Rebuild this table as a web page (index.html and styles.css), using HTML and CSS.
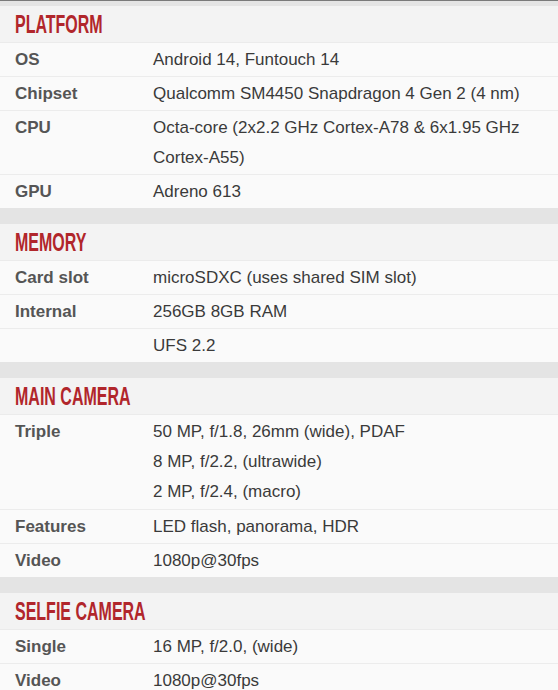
FILE: index.html
```html
<!DOCTYPE html>
<html>
<head>
<meta charset="utf-8">
<link rel="stylesheet" href="styles.css">
</head>
<body>
<div class="page">
  <div class="topline"></div>
  <div class="gap gap-top"></div>

  <section class="spec">
    <div class="spec-head"><h2 class="spec-title">PLATFORM</h2></div>
    <div class="row"><div class="label">OS</div><div class="value">Android 14, Funtouch 14</div></div>
    <div class="row"><div class="label">Chipset</div><div class="value">Qualcomm SM4450 Snapdragon 4 Gen 2 (4 nm)</div></div>
    <div class="row"><div class="label">CPU</div><div class="value">Octa-core (2x2.2 GHz Cortex-A78 &amp; 6x1.95 GHz Cortex-A55)</div></div>
    <div class="row"><div class="label">GPU</div><div class="value">Adreno 613</div></div>
  </section>
  <div class="gap"></div>

  <section class="spec">
    <div class="spec-head"><h2 class="spec-title">MEMORY</h2></div>
    <div class="row"><div class="label">Card slot</div><div class="value">microSDXC (uses shared SIM slot)</div></div>
    <div class="row"><div class="label">Internal</div><div class="value">256GB 8GB RAM</div></div>
    <div class="row"><div class="label"></div><div class="value">UFS 2.2</div></div>
  </section>
  <div class="gap"></div>

  <section class="spec">
    <div class="spec-head"><h2 class="spec-title">MAIN CAMERA</h2></div>
    <div class="row row-tall"><div class="label">Triple</div><div class="value">50 MP, f/1.8, 26mm (wide), PDAF<br>8 MP, f/2.2, (ultrawide)<br>2 MP, f/2.4, (macro)</div></div>
    <div class="row"><div class="label">Features</div><div class="value">LED flash, panorama, HDR</div></div>
    <div class="row"><div class="label">Video</div><div class="value">1080p@30fps</div></div>
  </section>
  <div class="gap"></div>

  <section class="spec">
    <div class="spec-head"><h2 class="spec-title">SELFIE CAMERA</h2></div>
    <div class="row"><div class="label">Single</div><div class="value">16 MP, f/2.0, (wide)</div></div>
    <div class="row"><div class="label">Video</div><div class="value">1080p@30fps</div></div>
  </section>
</div>
</body>
</html>
```
FILE: styles.css
```css
html, body {
  margin: 0;
  padding: 0;
  background: #fafafa;
}
.page {
  width: 558px;
  font-family: "Liberation Sans", Arial, sans-serif;
  font-size: 17px;
  color: #3a3a3a;
}
.topline {
  height: 1px;
  background: #7a7a7a;
}
.gap {
  height: 16px;
  background: #e4e4e4;
}
.gap-top {
  height: 5px;
}
.spec-head {
  height: 36px;
  background: #f3f3f3;
  border-bottom: 1px solid #ebebeb;
  padding-left: 15px;
  display: flex;
  align-items: center;
  overflow: hidden;
}
.spec-title {
  margin: 0;
  font-family: "Liberation Sans", Arial, sans-serif;
  font-weight: bold;
  font-size: 25px;
  line-height: 36px;
  color: #b1262b;
  display: inline-block;
  transform: scaleX(0.64);
  transform-origin: left center;
  white-space: nowrap;
}
.row {
  display: flex;
  background: #fafafa;
  border-bottom: 1px solid #ececec;
  padding: 2px 0 1px;
  line-height: 30px;
}
.row-tall {
  padding-bottom: 2px;
}
.row:last-child {
  border-bottom: none;
}
.label {
  width: 153px;
  flex: none;
  padding-left: 15px;
  box-sizing: border-box;
  font-weight: bold;
  color: #555;
}
.value {
  flex: 1;
  padding-right: 20px;
}
```
